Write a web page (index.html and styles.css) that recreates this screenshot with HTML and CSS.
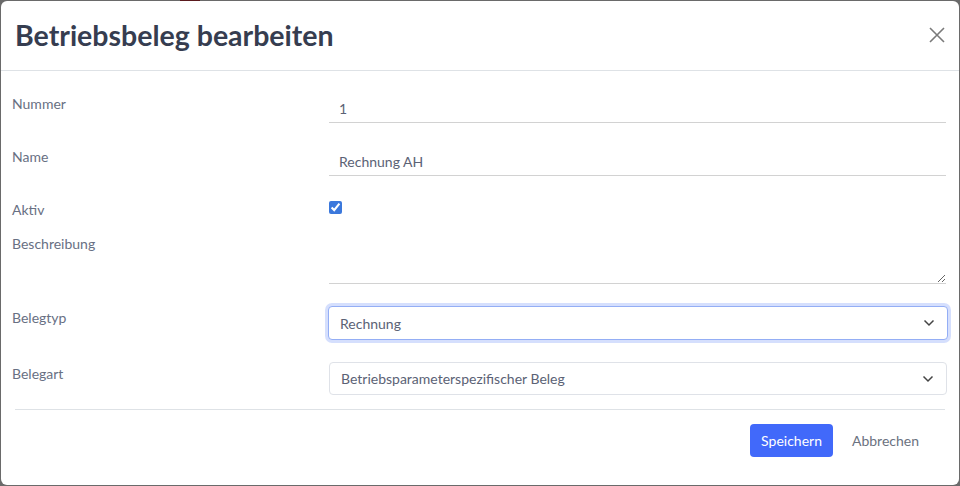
FILE: index.html
```html
<!DOCTYPE html>
<html lang="de">
<head>
    <meta charset="UTF-8">
    <meta name="viewport" content="width=device-width, initial-scale=1.0">
    <title>Betriebsbeleg bearbeiten</title>
    <link rel="stylesheet" href="styles.css">
</head>
<body>
    <div class="backdrop-mark"></div>
    <div class="modal">
        <div class="modal-header">
            <h1>Betriebsbeleg bearbeiten</h1>
            <button class="close" aria-label="Schließen">
                <svg width="16" height="16" viewBox="0 0 16 16">
                    <path d="M1 1 L15 15 M15 1 L1 15" stroke="#7a7a7a" stroke-width="1.6" fill="none"/>
                </svg>
            </button>
        </div>

        <form class="modal-body">
            <div class="row">
                <label for="nummer">Nummer</label>
                <input class="line" id="nummer" type="text" value="1">
            </div>
            <div class="row">
                <label for="name">Name</label>
                <input class="line" id="name" type="text" value="Rechnung AH">
            </div>
            <div class="row row-check">
                <label for="aktiv">Aktiv</label>
                <div><input id="aktiv" type="checkbox" checked></div>
            </div>
            <div class="row">
                <label for="beschreibung">Beschreibung</label>
                <textarea id="beschreibung"></textarea>
            </div>
            <div class="row">
                <label for="belegtyp">Belegtyp</label>
                <select class="focused" id="belegtyp">
                    <option>Rechnung</option>
                </select>
            </div>
            <div class="row row-last">
                <label for="belegart">Belegart</label>
                <select id="belegart">
                    <option>Betriebsparameterspezifischer Beleg</option>
                </select>
            </div>
        </form>

        <div class="modal-footer">
            <button class="btn-primary">Speichern</button>
            <button class="btn-link">Abbrechen</button>
        </div>
    </div>
</body>
</html>
```

FILE: styles.css
```css
* {
    margin: 0;
    padding: 0;
    box-sizing: border-box;
}

body {
    font-family: Lato, "Liberation Sans", sans-serif;
    background: #6a6a6a;
    height: 486px;
    padding: 1px;
    position: relative;
    overflow: hidden;
}

.backdrop-mark {
    position: absolute;
    top: 0;
    left: 180px;
    width: 20px;
    height: 1px;
    background: #5a1a1e;
}

.modal {
    background: #fff;
    border-radius: 6px;
    height: 484px;
}

.modal-header {
    height: 70px;
    border-bottom: 1px solid #dee2e6;
    display: flex;
    align-items: center;
    justify-content: space-between;
    padding: 0 14px 0 14px;
}

.modal-header h1 {
    font-size: 28.5px;
    font-weight: 700;
    color: #363d50;
    margin-top: -1px;
}

.close {
    background: none;
    border: none;
    cursor: pointer;
    width: 16px;
    height: 16px;
    margin-top: -2px;
}

.modal-body {
    padding: 21px 13px 0 11px;
}

.row {
    display: grid;
    grid-template-columns: 317px 1fr;
    align-items: start;
    margin-bottom: 22px;
}

.row label {
    padding-top: 2px;
    font-size: 14px;
    line-height: 20px;
    color: #687083;
}

.row-check {
    margin-bottom: 12px;
}

.row-last {
    margin-bottom: 0;
}

input.line {
    height: 31px;
    border: none;
    border-bottom: 1px solid #d2d2d2;
    padding: 6px 10px 4px;
    font-family: inherit;
    font-size: 14px;
    line-height: 20px;
    color: #5b6275;
    outline: none;
}

input[type="checkbox"] {
    width: 13px;
    height: 13px;
    margin-top: 3px;
    accent-color: #3b78dc;
}

textarea {
    height: 52px;
    border: none;
    border-bottom: 1px solid #d2d2d2;
    padding: 6px 10px;
    font-family: inherit;
    font-size: 14px;
    outline: none;
}

select {
    appearance: none;
    height: 33px;
    margin-right: -1px;
    border: 1px solid #dfe2e8;
    border-radius: 4px;
    padding: 0 36px 0 11px;
    font-family: inherit;
    font-size: 14px;
    color: #5b6275;
    background: #fff url("data:image/svg+xml,%3Csvg xmlns='http://www.w3.org/2000/svg' width='12' height='8' viewBox='0 0 12 8'%3E%3Cpath d='M1.5 1.5 L6 6 L10.5 1.5' stroke='%23444' stroke-width='1.5' fill='none'/%3E%3C/svg%3E") no-repeat right 12px center;
    outline: none;
}

select.focused {
    height: 34px;
    margin-left: -1px;
    margin-right: -2px;
    border-color: #94aef5;
    box-shadow: 0 0 0 3px rgba(66, 110, 245, 0.22);
}

.modal-footer {
    margin: 14px 14px 0 14px;
    border-top: 1px solid #dee2e6;
    padding: 14px 14px 0 0;
    display: flex;
    justify-content: flex-end;
    align-items: center;
    gap: 5px;
}

.btn-primary {
    background: #4169fa;
    color: #fff;
    border: none;
    border-radius: 4px;
    height: 33px;
    padding: 0 11px;
    font-family: inherit;
    font-size: 14px;
    cursor: pointer;
}

.btn-link {
    background: none;
    border: none;
    height: 33px;
    padding: 0 12px 0 14px;
    font-family: inherit;
    font-size: 14px;
    color: #6b7280;
    cursor: pointer;
}
```
